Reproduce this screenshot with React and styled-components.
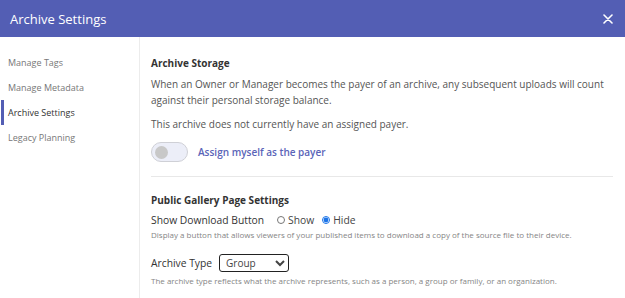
import React, { useState } from 'react'
import styled, { createGlobalStyle } from 'styled-components'

const GlobalStyle = createGlobalStyle`
  html, body { margin: 0; padding: 0; background: #fff; }
  body { font-family: "Open Sans", "Liberation Sans", sans-serif; overflow: hidden; }
  * { box-sizing: border-box; }
`

const Modal = styled.div`
  width: 625px;
  height: 298px;
  display: flex;
  flex-direction: column;
  background: #fff;
`

const Header = styled.div`
  height: 37px;
  flex: none;
  display: flex;
  align-items: center;
  justify-content: space-between;
  padding: 0 12px 0 10px;
  background: #535eb4;
  color: #fff;
  font-size: 13px;
`

const Close = styled.button`
  border: none;
  background: none;
  padding: 0;
  display: flex;
  color: #fff;
  cursor: pointer;
`

const Body = styled.div`
  flex: 1;
  display: flex;
`

const Sidebar = styled.nav`
  width: 140px;
  flex: none;
  border-right: 1px solid #ececec;
  padding-top: 13px;
  display: flex;
  flex-direction: column;
`

const NavItem = styled.div`
  height: 25px;
  display: flex;
  align-items: center;
  padding-left: 4px;
  margin-left: 1px;
  font-size: 9px;
  color: ${p => (p.$active ? '#333' : '#777')};
  font-weight: ${p => (p.$active ? 500 : 400)};
  border-left: 3px solid ${p => (p.$active ? '#535eb4' : 'transparent')};
`

const Main = styled.main`
  flex: 1;
  padding: 18px 12px 0 11px;
`

const Section = styled.section`
  display: flex;
  flex-direction: column;
`

const Title = styled.h3`
  margin: 0 0 ${p => p.$mb ?? 5}px;
  font-size: 10px;
  font-weight: 700;
  color: #333;
  line-height: 16px;
`

const Text = styled.p`
  margin: 0 0 ${p => p.$mb || 8}px;
  font-size: 10px;
  line-height: 16px;
  color: #555;
`

const ToggleRow = styled.label`
  display: flex;
  align-items: center;
  gap: 10px;
  cursor: pointer;
`

const Track = styled.span`
  width: 37px;
  height: 20px;
  border-radius: 10px;
  background: #eceef8;
  border: 1px solid #cfd0d6;
  display: flex;
  align-items: center;
  padding-left: 3px;
`

const Knob = styled.span`
  width: 13px;
  height: 13px;
  border-radius: 50%;
  background: #c8c8c8;
`

const ToggleLabel = styled.span`
  font-size: 10px;
  font-weight: 600;
  color: #5a64b8;
`

const Divider = styled.hr`
  border: none;
  border-top: 1px solid #e8e8e8;
  margin: 14px 0 15px;
`

const FieldRow = styled.div`
  display: flex;
  align-items: center;
  gap: ${p => p.$gap || 12}px;
  font-size: 10.3px;
  color: #333;
  line-height: 16px;
`

const FieldLabel = styled.span`
  font-weight: 500;
`

const Radios = styled.div`
  display: flex;
  align-items: center;
  gap: 8px;
`

const RadioLabel = styled.label`
  display: flex;
  align-items: center;
  gap: 3px;
  color: #444;
`

const Radio = styled.input`
  margin: 0;
  width: 8px;
  height: 8px;
  accent-color: #1a73e8;
`

const Hint = styled.div`
  font-size: 8px;
  color: #858585;
  line-height: 14px;
  margin: ${p => p.$mt || 0}px 0 ${p => p.$mb || 0}px;
`

const Select = styled.select`
  width: 70px;
  height: 18px;
  font-family: inherit;
  font-size: 10px;
  color: #444;
  border: 1.5px solid #222;
  border-radius: 3px;
  padding: 0 2px;
  background: #fff;
`

export default function App() {
  const [download, setDownload] = useState('hide')
  return (
    <Modal>
      <GlobalStyle />
      <Header>
        <span>Archive Settings</span>
        <Close aria-label="Close">
          <svg width="10" height="10" viewBox="0 0 10 10">
            <path d="M1 1 L9 9 M9 1 L1 9" stroke="#fff" strokeWidth="1.6" strokeLinecap="round" />
          </svg>
        </Close>
      </Header>
      <Body>
        <Sidebar>
          <NavItem>Manage Tags</NavItem>
          <NavItem>Manage Metadata</NavItem>
          <NavItem $active>Archive Settings</NavItem>
          <NavItem>Legacy Planning</NavItem>
        </Sidebar>
        <Main>
          <Section>
            <Title>Archive Storage</Title>
            <Text>
              When an Owner or Manager becomes the payer of an archive, any subsequent uploads will count
              against their personal storage balance.
            </Text>
            <Text $mb={10}>This archive does not currently have an assigned payer.</Text>
            <ToggleRow>
              <Track><Knob /></Track>
              <ToggleLabel>Assign myself as the payer</ToggleLabel>
            </ToggleRow>
          </Section>
          <Divider />
          <Section>
            <Title $mb={4}>Public Gallery Page Settings</Title>
            <FieldRow $gap={13}>
              <FieldLabel>Show Download Button</FieldLabel>
              <Radios>
                <RadioLabel>
                  <Radio type="radio" name="dl" checked={download === 'show'} onChange={() => setDownload('show')} />
                  Show
                </RadioLabel>
                <RadioLabel>
                  <Radio type="radio" name="dl" checked={download === 'hide'} onChange={() => setDownload('hide')} />
                  Hide
                </RadioLabel>
              </Radios>
            </FieldRow>
            <Hint $mb={12}>
              Display a button that allows viewers of your published items to download a copy of the source file to their device.
            </Hint>
            <FieldRow $gap={7}>
              <FieldLabel>Archive Type</FieldLabel>
              <Select defaultValue="group">
                <option value="person">Person</option>
                <option value="group">Group</option>
                <option value="organization">Organization</option>
              </Select>
            </FieldRow>
            <Hint $mt={2}>
              The archive type reflects what the archive represents, such as a person, a group or family, or an organization.
            </Hint>
          </Section>
        </Main>
      </Body>
    </Modal>
  )
}
